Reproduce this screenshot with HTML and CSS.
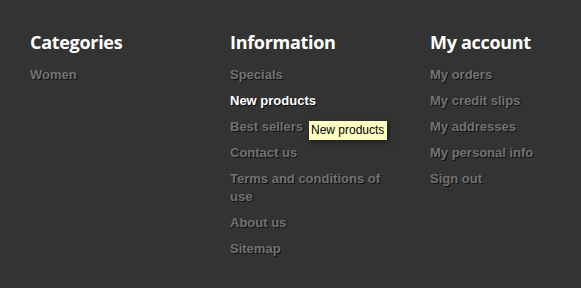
FILE: index.html
```html
<!DOCTYPE html>
<html lang="en">
<head>
    <meta charset="UTF-8">
    <meta name="viewport" content="width=device-width, initial-scale=1.0">
    <title>Footer</title>
    <link rel="stylesheet" href="styles.css">
</head>
<body>
    <div class="footer">
        <div class="block">
            <h4>Categories</h4>
            <ul>
                <li><a href="#">Women</a></li>
            </ul>
        </div>
        <div class="block">
            <h4>Information</h4>
            <ul>
                <li><a href="#">Specials</a></li>
                <li class="tip-wrap"><a href="#" class="active">New products</a><span class="tooltip">New products</span></li>
                <li><a href="#">Best sellers</a></li>
                <li><a href="#">Contact us</a></li>
                <li><a href="#">Terms and conditions of use</a></li>
                <li><a href="#">About us</a></li>
                <li><a href="#">Sitemap</a></li>
            </ul>
        </div>
        <div class="block">
            <h4>My account</h4>
            <ul>
                <li><a href="#">My orders</a></li>
                <li><a href="#">My credit slips</a></li>
                <li><a href="#">My addresses</a></li>
                <li><a href="#">My personal info</a></li>
                <li><a href="#">Sign out</a></li>
            </ul>
        </div>
    </div>
</body>
</html>
```

FILE: styles.css
```css
body {
    margin: 0;
    background-color: #333333;
    font-family: "Liberation Sans", Arial, sans-serif;
}
.footer {
    display: grid;
    grid-template-columns: 200px 200px 1fr;
    padding: 31px 0 0 30px;
}
.block {
    padding-right: 30px;
}
h4 {
    margin: 0 0 12.5px;
    font-family: "Open Sans", sans-serif;
    font-size: 18px;
    font-weight: 700;
    line-height: 22px;
    letter-spacing: -0.3px;
    color: #ffffff;
}
ul {
    list-style: none;
    margin: 0;
    padding: 0;
}
li {
    margin-bottom: 8px;
    font-size: 13px;
    font-weight: 700;
    line-height: 18px;
}
li a {
    color: #727272;
    text-decoration: none;
    text-shadow: 1px 1px 0 #111111;
}
li a.active {
    color: #ffffff;
}
.tip-wrap {
    position: relative;
}
.tooltip {
    position: absolute;
    left: 79px;
    top: 29.5px;
    padding: 2px 3px 3px 2px;
    background-color: #ffffc4;
    color: #000000;
    font-size: 12px;
    font-weight: 400;
    line-height: 14px;
    white-space: nowrap;
    box-shadow: 1px 2px 5px rgba(0, 0, 0, 0.5);
}
```
